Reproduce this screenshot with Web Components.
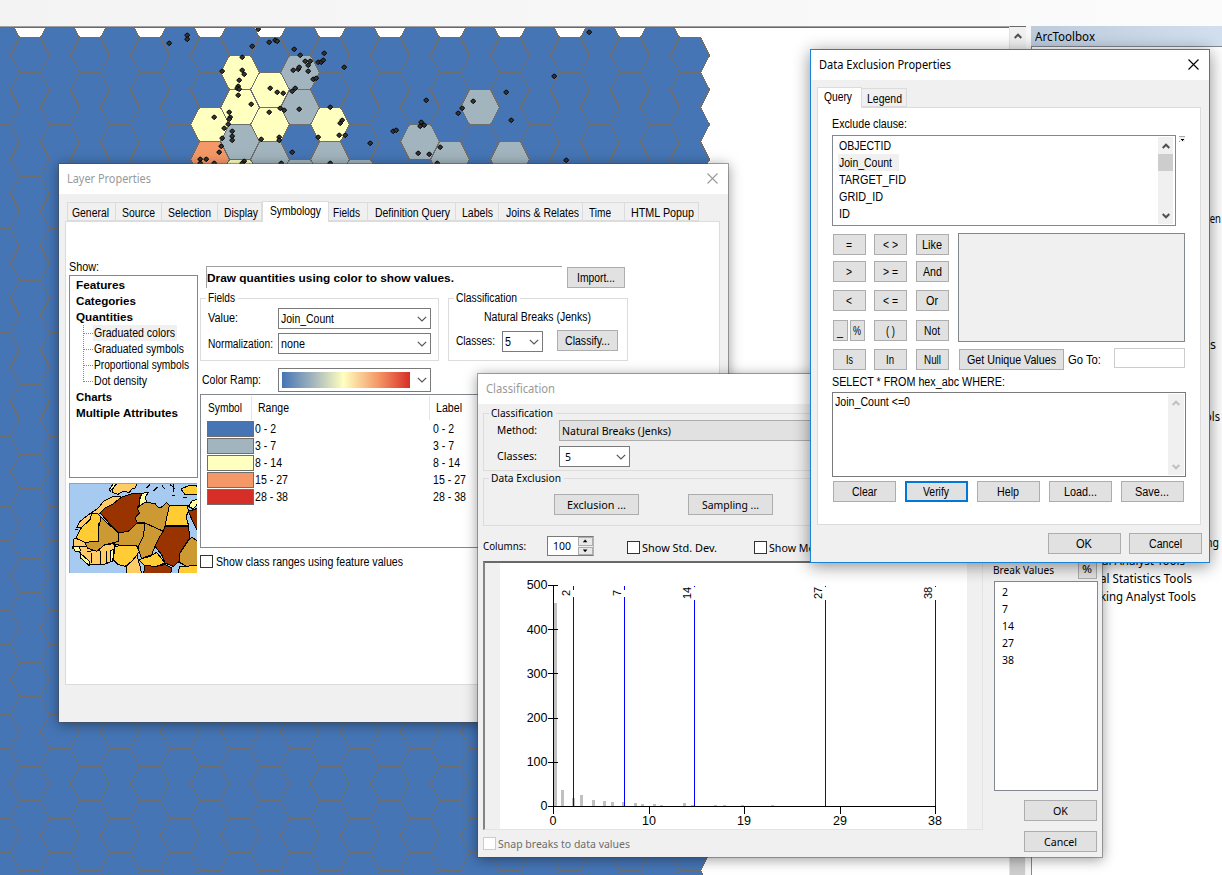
<!DOCTYPE html>
<html lang="en">
<head>
<meta charset="utf-8">
<title>Data Exclusion Properties</title>
<style>
html,body{margin:0;height:100%;overflow:hidden;background:#fff}
</style>
</head>
<body>
<gis-desktop></gis-desktop>
<script>
const def=(name,html,setup)=>customElements.define(name,class extends HTMLElement{
  constructor(){super();this.attachShadow({mode:'open'}).innerHTML=html;}
  connectedCallback(){if(setup)setup(this,this.shadowRoot);}
});

/* ---------- map of hexagon bins with incident points ---------- */
def('hex-map',`<style>:host{display:block;width:1009px;height:847px;background:#fff;overflow:hidden}svg{display:block}</style>
<svg width="1009" height="847" viewBox="0 28 1009 847"></svg>`,(el,root)=>{
  const B='#4575b5',G='#a2b4bd',Y='#ffffbf',O='#f59867';
  const special={'7,1':Y,'7,2':Y,'7,3':G,'7,4':Y,'8,1':Y,'8,2':Y,'8,3':G,'9,1':G,'9,2':G,'9,4':G,'6,2':Y,'6,3':O,'10,2':Y,'10,3':G,'11,4':G,'13,3':G,'14,3':G,'15,2':G,'16,3':G};
  let fills='',edges='';
  for(let k=-1;k<=22;k++)for(let r=0;r<26;r++){
    const n=2*r+(k%2?0:1),y=i=>Math.round(20+17.34*(n+i))+.5;
    const x=30*k+29,[a,b,c,d]=[x-19,x-10,x+11,x+20].map(v=>v+.5);
    fills+=`<path fill="${special[k+','+r]||B}" d="M${a} ${y(1)}L${b} ${y(0)}H${c}L${d} ${y(1)}L${c} ${y(2)}H${b}Z"/>`;
    edges+=`M${a} ${y(1)}L${b} ${y(0)}H${c}L${d} ${y(1)}`+(k==22?`L${c} ${y(2)}`:'');
  }
  let out=`<g shape-rendering="crispEdges">${fills}<path d="${edges}" fill="none" stroke="#6e6e6e"/></g><g fill="#333" stroke="#000">`;
  const pts='169,43 187,35 187,39 258,29 252,46 269,42 275,40 277,41 242,57 222,71 242,70 244,74 239,80 238,86 237,88 239,89 238,95 251,104 294,49 300,55 305,61 310,61 308,65 308,71 293,70 298,69 299,67 324,53 318,62 321,62 323,60 344,67 313,79 316,78 270,88 277,92 283,93 292,91 295,88 280,108 284,110 299,109 269,112 330,107 214,117 229,112 230,117 228,124 229,119 224,128 222,138 232,131 232,136 232,140 221,146 219,152 200,159 206,159 200,163 214,163 244,161 242,163 281,163 261,139 279,137 279,140 292,152 318,137 342,120 340,123 339,135 345,135 370,143 393,131 396,130 330,163 554,76 506,92 426,100 421,122 424,125 420,126 473,101 462,108 458,113 511,120 589,32 418,153 429,154 440,147 437,163 566,160';
  for(const s of pts.split(' ')){const [x,y]=s.split(',').map(Number);
    out+=`<path d="M${x-.2} ${y-2}h.8l1.8 1.8v.8l-1.8 1.8h-.8l-1.8-1.8v-.8z"/>`;}
  root.querySelector('svg').innerHTML=out+'</g>';
});

/* ---------- small controls ---------- */
def('ui-button',`<style>:host{display:flex;flex:none;align-items:center;justify-content:center;box-sizing:border-box;width:var(--w);height:var(--h,21px);padding-right:1px;border:1px solid #adadad;background:#e1e1e1;color:#000}
:host([default]){border:2px solid #0078d7}</style><slot></slot>`);

def('ui-combo',`<style>:host{display:flex;flex:none;align-items:center;box-sizing:border-box;width:var(--w);height:var(--h,21px);border:1px solid #7a7a7a;background:#fff;padding:0 3px 0 2px}
:host([flat]){border-color:#adadad;background:#e1e1e1}svg{margin-left:auto;flex:none}</style><slot></slot><svg width="10" height="6" viewBox="0 0 10 6"><path d="M.8.8 5 5 9.2.8" fill="none" stroke="#555" stroke-width="1.2"/></svg>`);

def('ui-check',`<style>:host{display:flex;flex:none;height:13px;align-items:center;gap:var(--g,3px)}i{display:block;box-sizing:border-box;width:13px;height:13px;border:1px solid #333;background:#fff;flex:none}
:host([disabled]){color:#6d6d6d}:host([disabled]) i{border-color:#ccc}</style><i></i><slot></slot>`);

def('ui-group',`<style>:host{display:flex;flex:none;flex-direction:column;box-sizing:border-box;width:var(--group-w);height:var(--group-h);border:1px solid #dcdcdc}
.legend{flex:none;width:max-content;height:14px;margin:-8px 0 0 5px;padding:0 3px 0 2px;background:var(--bg,#fff)}</style>
<div class="legend"><slot name="legend"></slot></div><slot></slot>`);

def('ui-scroll',`<style>:host{display:flex;flex-direction:column;align-items:center;background:#f0f0f0;width:var(--w,15px);box-sizing:border-box;color:#505050}
i{align-self:stretch;height:var(--t,0);background:#cdcdcd}svg{flex:none;display:block;margin:6px 0 5px}svg:last-child{margin:auto 0 5px}:host([cut]) svg:last-child{display:none}</style>
<svg width="8" height="6" viewBox="0 0 8 6"><path d="M.7 5 4 1.7 7.3 5" fill="none" stroke="currentColor" stroke-width="2"/></svg><i></i>
<svg width="8" height="6" viewBox="0 0 8 6"><path d="M.7 1 4 4.3 7.3 1" fill="none" stroke="currentColor" stroke-width="2"/></svg>`);

def('ui-tab',`<style>:host{display:block;flex:none;box-sizing:border-box;width:var(--w);height:19px;padding:3px 0 0 var(--p);background:#f0f0f0;border:1px solid #dcdcdc;border-left-width:0}
:host([first]){border-left-width:1px}
:host([on]){height:21px;background:#fff;border-width:1px 1px 0;padding-top:2px;margin-bottom:-1px;position:relative;z-index:1}</style><slot></slot>`);

def('ui-window',`<style>:host{position:absolute;display:flex;flex-direction:column;box-sizing:border-box;border:1px solid rgba(70,70,70,.45);background:#f0f0f0 padding-box;box-shadow:0 2px 12px rgba(0,0,0,.38);color:#999;overflow:visible}
:host([active]){border-color:#1883d7;color:#000;box-shadow:0 3px 16px rgba(0,0,0,.45)}
header{display:flex;flex:none;justify-content:space-between;height:30px;box-sizing:border-box;padding:8px 10px 0 8px;background:#fff;font:12.5px "Noto Sans",sans-serif}
header svg{display:block;margin-top:1px}
main{flex:1;color:#000;overflow:hidden}</style>
<header><slot name="title"></slot><svg width="11" height="11" viewBox="0 0 11 11"><path d="M.5.5l10 10M10.5.5l-10 10" fill="none" stroke="currentColor" stroke-width="1.1"/></svg></header><main><slot></slot></main>`);

def('ramp-swatch',`<style>:host{display:block;width:128px;height:16px;margin-left:1px;background:linear-gradient(90deg,#4575b5,#a2b4bd 24%,#ffffbf 48%,#f59867 75%,#d62f27)}</style>`);

/* ---------- preview picture: graduated colours on north Africa ---------- */
def('africa-preview',`<style>:host{display:block;box-sizing:border-box;width:128px;height:90px;border-left:1px solid #a0a0a0;border-top:1px solid #a0a0a0;background:#a6caf0;overflow:hidden}svg{display:block}</style>
<svg width="128" height="89" viewBox="60 313 384 267"><g stroke="#000" stroke-width="3" stroke-linejoin="round" shape-rendering="crispEdges">
<g fill="#fc6"><path d="M200 309H262L255 325 245 328 238 338 220 335 204 344 186 338 190 325z"/><path d="M145 385 160 365 185 352 212 350 205 370 165 385 150 400 95 443 80 445 90 425 120 402z"/>
<path d="M72 478 95 473 105 488 118 500 140 515 165 495 190 492 197 500 185 545 160 555 120 556 100 535 85 510 68 507z"/><path d="M110 515 150 512 152 552M125 520V550M170 515V552M75 500h35"/>
<path d="M265 510 262 530 270 560 275 582H230L228 560 245 545z"/></g>
<path fill="#ff9" d="M275 341 295 338 285 355 290 365 272 380 265 375zM70 502 88 500 92 514 75 515zM90 520 118 545V558L92 535zM182 512 192 510 188 545H180zM180 335 200 312H190L178 330z"/>
<g fill="#930"><path d="M165 385 190 372 215 352 245 342 275 341 267 360 267 375 262 385 270 400 255 415 262 430 235 455 205 460 150 400z"/><path d="M345 440H415L420 475 405 495 390 520 388 545 370 560 345 550 335 525 315 500 330 470z"/><path d="M285 558 320 560 345 555 365 565 362 583H280z"/><path d="M415 395 446 385V460L430 430z"/></g>
<g fill="#c93"><path d="M285 367 315 372 325 383 335 382 350 368 358 378 345 440 340 455 285 430 262 428 255 415 268 400 262 385z"/><path d="M285 430 340 455 330 470 315 500 305 525 290 530 275 537 265 510 268 490 280 470z"/><path d="M262 430 285 430 280 470 265 500 240 496 215 498 195 493 180 490 205 485V460L235 455z"/><path d="M152 412 205 460V485L165 495 140 515 112 505 105 488 145 485V440z"/><path d="M415 482 425 473 446 485V560L410 560 388 548 387 525z"/></g>
<g fill="#fc3"><path d="M358 378 385 378 412 376 415 395 408 412 416 438H345z"/><path d="M95 443 80 470 82 478 105 488 145 485 147 440 153 412 140 400 125 402 120 420z"/><path d="M195 500 225 497 260 498 268 515 258 530 245 545 225 560 205 555 190 540z"/><path d="M265 540 300 530 320 518 345 550 320 560 285 558z"/><path d="M388 560 446 558V584H385z"/><path d="M393 328 420 316 446 320V345L405 345z"/></g>
<path fill="#ff9" d="M415 380 428 362 441 360V375L430 388z"/><path fill="none" d="M290 325l10-10M310 335l12-12M335 315l8 12M360 315l15 12M365 348h10M400 352h12M370 312v25M145 430v40M75 450h10"/></g></svg>`);

/* ---------- histogram with class breaks ---------- */
def('break-histogram',`<style>:host{display:block;box-sizing:border-box;width:500px;height:269px;border:1px solid #e3e3e3;border-top:2px solid #696969;border-left:2px solid #848484;background:linear-gradient(#fff,#fff) 15px 0/467px 100% no-repeat #f0f0f0}svg{display:block}text{font:12.5px "Liberation Sans",sans-serif}</style>
<svg width="497" height="266" viewBox="485 563 497 266"></svg>`,(el,root)=>{
  let o='<g shape-rendering="crispEdges"><g fill="#c0c0c0">';
  for(const [x,y] of [[554,603],[561,790],[572,798],[580,795],[592,800],[603,801],[611,802],[622,802],[634,803],[641,804],[653,804],[660,805],[683,803],[691,805],[714,805],[723,805],[741,805],[771,805]])
    o+=`<rect x="${x}" y="${y}" width="3" height="${806-y}"/>`;
  o+='</g><g fill="#00f">';
  for(const [x,two] of [[573,0],[624,0],[694,1],[825,1],[935,1]])
    o+=`<rect x="${x}" y="586" width="1" height="${two?1:4}"/><rect x="${x}" y="${two?600:597}" width="1" height="${two?206:209}"/>`;
  o+='</g><path d="M553 585h1v221h-1zM548 806h388v1h-388z"/>';
  for(const y of [585,629,673,718,762])o+=`<path d="M548 ${y}h10v1h-10z"/>`;
  for(const x of [553,649,744,840,935])o+=`<path d="M${x} 806h1v8h-1z"/>`;
  o+='</g>';
  [500,400,300,200,100,0].forEach((v,i)=>o+=`<text x="547.5" y="${589.3+44.2*i}" text-anchor="end">${v}</text>`);
  [[0,553],[10,649],[19,744],[29,840],[38,935]].forEach(([v,x])=>o+=`<text x="${x}" y="825" text-anchor="middle">${v}</text>`);
  [[2,570,596],[7,621,596],[14,691,599],[27,822,599],[38,932,599]].forEach(([v,x,y])=>o+=`<text transform="translate(${x} ${y}) rotate(-90)" style="font-size:11px">${v}</text>`);
  root.querySelector('svg').innerHTML=o;
});

/* ---------- Layer Properties ---------- */
const tab=(t,w,full,p,x='')=>`<ui-tab style="--w:${full}px;--p:${p}px" ${x}><t-t w="${w}">${t}</t-t></ui-tab>`;
def('layer-properties',`<style>:host{display:contents;font:12px "Liberation Sans",sans-serif}
ui-window{left:58px;top:163px;width:671px;height:560px}
.tabs{display:flex;align-items:flex-end;height:20px;margin:7px 0 0 8px}
.panel{display:flex;box-sizing:border-box;width:655px;height:464px;margin-left:6px;padding-left:3px;border:1px solid #dcdcdc;background:#fff;align-items:flex-start}
.left{width:129px;margin-top:38px}.left>t-t{display:block}
.tree{box-sizing:border-box;width:129px;height:203px;margin:1px 0 5px;border:1px solid #828790;padding:1px 0 0 6px}
.tree b{display:block;font-size:11.5px;height:16px;padding-top:1px;box-sizing:border-box}
.kids{margin-left:7px;display:block;background:repeating-linear-gradient(#888 0 1px,transparent 1px 2px) 0 0/1px 56px no-repeat}
.kid{display:flex;align-items:center;height:16px}.kid i{width:10px;height:0;border-top:1px dotted #888}
.kid span{padding:0 2px 0 1px;height:16px;display:flex;align-items:center}.kid.sel span{background:#f0f0f0}
.right{margin:44px 0 0 2px}.row{display:flex;align-items:flex-start}
.head{box-sizing:border-box;width:356px;height:22px;margin:0 5px 0 6px;border:1px solid #a0a0a0;border-width:1px 0 0 1px;padding:4px 0 0;font-weight:bold;font-size:11.5px}
.table{box-sizing:border-box;width:480px;height:154px;margin:2px 0 7px;border:1px solid #828790;padding:1px 0 0 6px}
.th{display:flex;height:24px;align-items:center}.th i{width:1px;height:24px;background:#e5e5e5}
.tr{display:flex;height:17px;align-items:center}.tr i{box-sizing:border-box;width:47px;height:16px;border:1px solid #6e6e6e;margin-right:1px}
</style>
<ui-window><t-t slot="title" w="84">Layer Properties</t-t>
<div class="tabs">${tab('General',37,49,4,'first')}${tab('Source',33,46,6)}${tab('Selection',43,56,6)}${tab('Display',34,44,6)}${tab('Symbology',51,67,7,'on')}${tab('Fields',27,39,4)}${tab('Definition Query',75,88,7)}${tab('Labels',31,43,6)}${tab('Joins &amp; Relates',73,84,7)}${tab('Time',22,42,6)}${tab('HTML Popup',63,74,6)}</div>
<div class="panel"><div class="left"><t-t w="30">Show:</t-t>
<div class="tree"><b><t-t w="49">Features</t-t></b><b><t-t w="60">Categories</t-t></b><b><t-t w="57">Quantities</t-t></b>
<div class="kids">${[['Graduated colors',81],['Graduated symbols',90],['Proportional symbols',95],['Dot density',53]].map(([t,w],i)=>`<div class="kid ${i?'':'sel'}"><i></i><span><t-t w="${w}">${t}</t-t></span></div>`).join('')}</div>
<b><t-t w="36">Charts</t-t></b><b><t-t w="102">Multiple Attributes</t-t></b></div>
<africa-preview></africa-preview></div>
<div class="right"><div class="row"><div class="head"><t-t w="247">Draw quantities using color to show values.</t-t></div><ui-button style="--w:58px;margin-top:1px"><t-t w="38">Import...</t-t></ui-button></div>
<div class="row" style="margin-top:10px"><ui-group style="--group-w:239px;--group-h:63px"><t-t slot="legend" w="27">Fields</t-t>
<div class="row" style="margin:3px 0 0 7px"><t-t w="30" style="margin:3px 40px 0 0">Value:</t-t><ui-combo style="--w:153px"><t-t w="53">Join_Count</t-t></ui-combo></div>
<div class="row" style="margin:4px 0 0 7px"><t-t w="65" style="margin:4px 5px 0 0">Normalization:</t-t><ui-combo style="--w:153px"><t-t w="24">none</t-t></ui-combo></div></ui-group>
<ui-group style="--group-w:180px;--group-h:63px;margin-left:9px"><t-t slot="legend" w="61">Classification</t-t>
<t-t w="107" style="margin:5px 0 6px 35px">Natural Breaks (Jenks)</t-t>
<div class="row" style="margin-left:7px"><t-t w="39" style="margin:4px 7px 0 0">Classes:</t-t><ui-combo style="--w:41px;margin-top:1px"><t-t w="6">5</t-t></ui-combo><ui-button style="--w:61px;margin-left:14px"><t-t w="45">Classify...</t-t></ui-button></div></ui-group></div>
<div class="row" style="margin:7px 0 0 2px"><t-t w="59" style="margin:5px 17px 0 0">Color Ramp:</t-t><ui-combo style="--w:153px;--h:24px"><ramp-swatch></ramp-swatch></ui-combo></div>
<div class="table"><div class="th"><t-t w="34" style="margin:0 9px 0 1px">Symbol</t-t><i></i><t-t w="31" style="margin:0 140px 0 6px">Range</t-t><i></i><t-t w="26" style="margin-left:6px">Label</t-t></div>
${[['#4575b5','0 - 2',21],['#a2b4bd','3 - 7',21],['#ffffbf','8 - 14',27],['#f59867','15 - 27',33],['#d62f27','28 - 38',33]].map(([c,t,w])=>`<div class="tr"><i style="background:${c}"></i><t-t w="${w}">${t}</t-t><t-t w="${w}" style="margin-left:${178-w}px">${t}</t-t></div>`).join('')}</div>
<ui-check><t-t w="187">Show class ranges using feature values</t-t></ui-check>
</div></div></ui-window>`);

/* ---------- Classification ---------- */
def('classification-dialog',`<style>:host{display:contents;font:11.5px "Noto Sans",sans-serif}
ui-window{left:477px;top:373px;width:626px;height:485px}.row{display:flex;align-items:flex-start}
.left{width:500px;margin-left:5px}.right{width:104px;margin:155px 0 0 11px}
ui-group{--bg:#f0f0f0}
.spin{display:flex;box-sizing:border-box;width:47px;height:20px;margin-left:21px;border:1px solid #7a7a7a;border-right-color:#b5b5b5;background:#fff;padding-left:5px;align-items:center}
.spin div{margin-left:auto;display:grid;width:15px;height:18px;gap:1px;background:#f0f0f0}
.spin svg{border:1px solid #adadad;box-sizing:border-box;width:15px;height:8.5px;background:#e8e8e8;display:block}
.list{box-sizing:border-box;height:210px;margin:2px 0 9px;border:1px solid #828790;background:#fff;padding:1px 0 0 7px}
.list t-t{height:17px;line-height:17px;display:block}</style>
<ui-window><t-t slot="title" w="69">Classification</t-t>
<div class="row"><div class="left">
<ui-group style="--group-w:500px;--group-h:58px;margin-top:9px"><t-t slot="legend" w="62">Classification</t-t>
<div class="row" style="margin-left:13px"><t-t w="40" style="margin:3px 22px 0 0">Method:</t-t><ui-combo flat style="--w:415px"><t-t w="109">Natural Breaks (Jenks)</t-t></ui-combo></div>
<div class="row" style="margin:5px 0 0 13px"><t-t w="40" style="margin:3px 22px 0 0">Classes:</t-t><ui-combo style="--w:71px"><t-t w="6" style="margin-left:3px">5</t-t></ui-combo></div></ui-group>
<ui-group style="--group-w:500px;--group-h:48px;margin-top:7px"><t-t slot="legend" w="70">Data Exclusion</t-t>
<div class="row" style="margin:9px 0 0 70px;gap:49px"><ui-button style="--w:85px"><t-t w="59">Exclusion ...</t-t></ui-button><ui-button style="--w:85px"><t-t w="57">Sampling ...</t-t></ui-button></div></ui-group>
<div class="row" style="margin-top:10px;height:20px"><t-t w="43" style="margin-top:3px">Columns:</t-t>
<div class="spin"><t-t w="18">100</t-t><div><svg viewBox="0 0 15 8.5"><path d="M4 5.5 7 2l3 3.5z"/></svg><svg viewBox="0 0 15 8.5"><path d="M4 2 7 5.500 10 2z"/></svg></div></div>
<ui-check style="margin:5px 0 0 33px;--g:2px"><t-t w="75">Show Std. Dev.</t-t></ui-check><ui-check style="margin:5px 0 0 37px;--g:2px"><t-t w="58">Show Mean</t-t></ui-check></div>
<break-histogram style="margin-top:5px"></break-histogram>
<ui-check disabled style="margin-top:7px;--g:2px"><t-t w="132">Snap breaks to data values</t-t></ui-check></div>
<div class="right"><div class="row"><t-t w="61" style="margin:4px 24px 0 -1px">Break Values</t-t><ui-button style="--w:19px;--h:20px"><t-t w="10">%</t-t></ui-button></div>
<div class="list"><t-t w="6">2</t-t><t-t w="6">7</t-t><t-t w="12">14</t-t><t-t w="12">27</t-t><t-t w="12">38</t-t></div>
<ui-button style="--w:73px;margin:0 0 10px 30px"><t-t w="15">OK</t-t></ui-button><ui-button style="--w:73px;margin-left:30px"><t-t w="33">Cancel</t-t></ui-button></div></div></ui-window>`);

/* ---------- Data Exclusion Properties ---------- */
const key=(t,w)=>`<ui-button style="--w:33px"><t-t w="${w}">${t}</t-t></ui-button>`;
def('exclusion-dialog',`<style>:host{display:contents;font:12px "Liberation Sans",sans-serif}
ui-window{left:810px;top:49px;width:400px;height:514px}.row{display:flex;align-items:flex-start}
.tabs{display:flex;align-items:flex-end;height:20px;margin:7px 0 0 6px}
.panel{box-sizing:border-box;width:384px;height:418px;margin-left:6px;padding:9px 0 0 14px;border:1px solid #dcdcdc;background:#fff}
.list{display:flex;flex:none;box-sizing:border-box;width:344px;height:91px;border:1px solid #828790;padding:1px 2px 1px 5px}
.items{flex:1}.item{display:flex;align-items:center;width:max-content;height:17px;padding:0 7px 0 1px}.sel{background:#f0f0f0}
.drop{margin:1px 0 0 3px;flex:none}
.keys{display:grid;grid-template:27px 29px 30px 29px 21px/41px 42px 42px auto;margin:8px 0 5px 1px;justify-content:start}
.values{grid-column:4;grid-row:1/5;box-sizing:border-box;width:227px;height:109px;margin-top:-1px;background:#f0f0f0;border:1px solid #828790}
.last{grid-column:4;grid-row:5;display:flex;margin-left:1px}
.go{box-sizing:border-box;width:71px;height:20px;border:1px solid #ccc;margin:-1px 0 0 13px}
.sql{display:flex;justify-content:space-between;box-sizing:border-box;width:354px;height:85px;margin:3px 0 4px;border:1px solid #7a7a7a;padding:1px 1px 1px 2px}.sql ui-scroll{color:#bfbfbf}</style>
<ui-window active><t-t slot="title" w="132">Data Exclusion Properties</t-t>
<div class="tabs">${tab('Query',28,45,6,'on')}${tab('Legend',35,45,5)}</div>
<div class="panel"><t-t w="75">Exclude clause:</t-t>
<div class="row" style="margin-top:4px"><div class="list"><div class="items">${[['OBJECTID',52],['Join_Count',53],['TARGET_FID',67],['GRID_ID',44],['ID',11]].map(([t,w],i)=>`<div class="item ${i==1?'sel':''}"><t-t w="${w}">${t}</t-t></div>`).join('')}</div><ui-scroll style="--t:17px"></ui-scroll></div>
<svg class="drop" width="6" height="6" viewBox="0 0 6 6" shape-rendering="crispEdges"><path fill="#f0f0f0" d="M0 0h6v6H0z"/><path d="M2 3h3v1H2zM3 4h1v1H3z"/><path fill="#aaa" d="M0 0h6v1H0zM0 5h1v1H0z"/></svg></div>
<div class="keys">${key('=',6)}${key('&lt; &gt;',15)}${key('Like',20)}<div class="values"></div>
${key('&gt;',6)}${key('&gt; =',15)}${key('And',19)}${key('&lt;',6)}${key('&lt; =',15)}${key('Or',12)}
<div class="row" style="gap:2px"><ui-button style="--w:15px"><t-t w="6">_</t-t></ui-button><ui-button style="--w:15px"><t-t w="8">%</t-t></ui-button></div>${key('( )',9)}${key('Not',16)}
${key('Is',7)}${key('In',8)}${key('Null',17)}
<div class="last"><ui-button style="--w:105px"><t-t w="89">Get Unique Values</t-t></ui-button><t-t w="33" style="margin:4px 0 0 4px">Go To:</t-t><div class="go"></div></div></div>
<t-t w="173">SELECT * FROM hex_abc WHERE:</t-t>
<div class="sql"><t-t w="75" style="margin-top:1px">Join_Count &lt;=0</t-t><ui-scroll style="--w:16px"></ui-scroll></div>
<div class="row" style="gap:9px;margin-left:1px">${[['Clear',25],['Verify',26],['Help',22],['Load...',33],['Save...',34]].map(([t,w],i)=>`<ui-button ${i==1?'default':''} style="--w:63px"><t-t w="${w}">${t}</t-t></ui-button>`).join('')}</div></div>
<div class="row" style="margin:8px 0 0 237px;gap:8px"><ui-button style="--w:73px"><t-t w="16">OK</t-t></ui-button><ui-button style="--w:73px"><t-t w="33">Cancel</t-t></ui-button></div></ui-window>`);

/* ---------- toolbox panel, docked right ---------- */
def('arc-toolbox',`<style>:host{display:block;width:191px;height:849px;font:12.5px "Noto Sans",sans-serif;overflow:hidden}
header{box-sizing:border-box;height:20px;padding:4px 0 0 4px;background:linear-gradient(90deg,#bccbdc,#d2dfee)}
.tree{border:1px solid #828790;border-width:1px 0 0 1px;height:829px;display:grid;grid-template-columns:100%;grid-auto-rows:18px;padding-top:163px;box-sizing:border-box;background:#fff}
.tree t-t{grid-column:1;justify-self:start;align-self:center}</style>
<header><t-t w="60">ArcToolbox</t-t></header>
<div class="tree">${[[1,'ren',15,174],[8,'s',6,178],[12,'ols',15,173],[19,'ng',13,174],[20,'al Analyst Tools',83,70],[21,'al Statistics Tools',92,68],[22,'king Analyst Tools',96,68]].map(([r,t,w,x])=>`<t-t w="${w}" style="grid-row:${r};margin-left:${x}px">${t}</t-t>`).join('')}</div>`);

def('gis-desktop',`<style>:host{display:block;position:relative;width:1222px;height:875px;overflow:hidden;background:#f7f7f7}
.bar{height:26px;background:linear-gradient(90deg,#f3f3f3,#fbfbfb)}
.work{display:flex;height:849px}
.view{box-sizing:border-box;border-top:1px solid #a0a0a0;height:849px;width:1009px}.view div{border-top:1px solid #696969}
ui-scroll{height:849px;border-top:1px solid #696969;border-left:1px solid #e3e3e3;width:17px;background:linear-gradient(90deg,transparent 15px,#f0f0f0 0),linear-gradient(#f0f0f0 50%,#cdcdcd 50%);margin-right:5px}</style>
<div class="bar"></div><div class="work"><div class="view"><div><hex-map></hex-map></div></div><ui-scroll cut></ui-scroll><arc-toolbox></arc-toolbox></div>
<layer-properties></layer-properties><classification-dialog></classification-dialog><exclusion-dialog></exclusion-dialog>`);

/* one line of text, condensed or expanded to the width given in w */
def('t-t',`<style>:host{display:block;flex:none;height:14px;line-height:14px;white-space:nowrap}span{display:inline-block;transform-origin:0 0}</style><span><slot></slot></span>`,(el,root)=>{
  const s=root.querySelector('span'),w=+el.getAttribute('w');
  el.style.width=w+'px';
  const n=s.offsetWidth?s.getBoundingClientRect().width:w;
  s.style.transform=`scaleX(${(w/n).toFixed(4)})`;
});
</script>
</body>
</html>
